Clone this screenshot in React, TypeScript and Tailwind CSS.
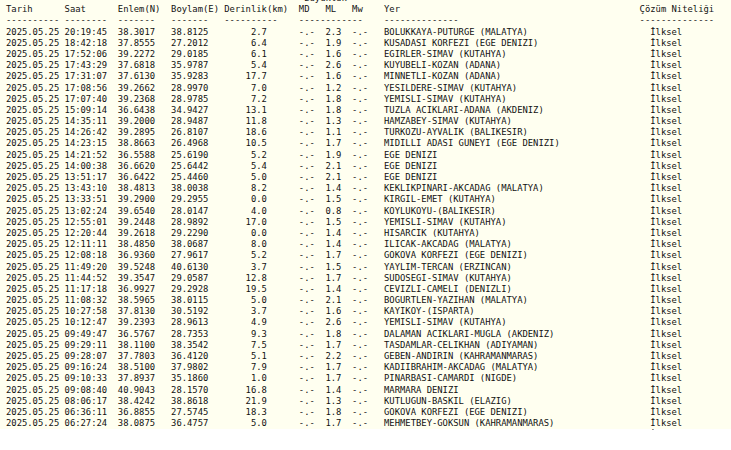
const rows: [string, string, string, string, string, string][] = [
    ['20:19:45', '38.3017', '38.8125', '2.7', '2.3', 'BOLUKKAYA-PUTURGE (MALATYA)'],
    ['18:42:18', '37.8555', '27.2012', '6.4', '1.9', 'KUSADASI KORFEZI (EGE DENIZI)'],
    ['17:52:06', '39.2272', '29.0185', '6.1', '1.6', 'EGIRLER-SIMAV (KUTAHYA)'],
    ['17:43:29', '37.6818', '35.9787', '5.4', '2.6', 'KUYUBELI-KOZAN (ADANA)'],
    ['17:31:07', '37.6130', '35.9283', '17.7', '1.6', 'MINNETLI-KOZAN (ADANA)'],
    ['17:08:56', '39.2662', '28.9970', '7.0', '1.2', 'YESILDERE-SIMAV (KUTAHYA)'],
    ['17:07:40', '39.2368', '28.9785', '7.2', '1.8', 'YEMISLI-SIMAV (KUTAHYA)'],
    ['15:09:14', '36.6438', '34.9427', '13.1', '1.8', 'TUZLA ACIKLARI-ADANA (AKDENIZ)'],
    ['14:35:11', '39.2000', '28.9487', '11.8', '1.3', 'HAMZABEY-SIMAV (KUTAHYA)'],
    ['14:26:42', '39.2895', '26.8107', '18.6', '1.1', 'TURKOZU-AYVALIK (BALIKESIR)'],
    ['14:23:15', '38.8663', '26.4968', '10.5', '1.7', 'MIDILLI ADASI GUNEYI (EGE DENIZI)'],
    ['14:21:52', '36.5588', '25.6190', '5.2', '1.9', 'EGE DENIZI'],
    ['14:00:38', '36.6620', '25.6442', '5.4', '2.1', 'EGE DENIZI'],
    ['13:51:17', '36.6422', '25.4460', '5.0', '2.1', 'EGE DENIZI'],
    ['13:43:10', '38.4813', '38.0038', '8.2', '1.4', 'KEKLIKPINARI-AKCADAG (MALATYA)'],
    ['13:33:51', '39.2900', '29.2955', '0.0', '1.5', 'KIRGIL-EMET (KUTAHYA)'],
    ['13:02:24', '39.6540', '28.0147', '4.0', '0.8', 'KOYLUKOYU-(BALIKESIR)'],
    ['12:55:01', '39.2448', '28.9892', '17.0', '1.5', 'YEMISLI-SIMAV (KUTAHYA)'],
    ['12:20:44', '39.2618', '29.2290', '0.0', '1.4', 'HISARCIK (KUTAHYA)'],
    ['12:11:11', '38.4850', '38.0687', '8.0', '1.4', 'ILICAK-AKCADAG (MALATYA)'],
    ['12:08:18', '36.9360', '27.9617', '5.2', '1.7', 'GOKOVA KORFEZI (EGE DENIZI)'],
    ['11:49:20', '39.5248', '40.6130', '3.7', '1.5', 'YAYLIM-TERCAN (ERZINCAN)'],
    ['11:44:52', '39.3547', '29.0587', '12.8', '1.7', 'SUDOSEGI-SIMAV (KUTAHYA)'],
    ['11:17:18', '36.9927', '29.2928', '19.5', '1.4', 'CEVIZLI-CAMELI (DENIZLI)'],
    ['11:08:32', '38.5965', '38.0115', '5.0', '2.1', 'BOGURTLEN-YAZIHAN (MALATYA)'],
    ['10:27:58', '37.8130', '30.5192', '3.7', '1.6', 'KAYIKOY-(ISPARTA)'],
    ['10:12:47', '39.2393', '28.9613', '4.9', '2.6', 'YEMISLI-SIMAV (KUTAHYA)'],
    ['09:49:47', '36.5767', '28.7353', '9.3', '1.8', 'DALAMAN ACIKLARI-MUGLA (AKDENIZ)'],
    ['09:29:11', '38.1100', '38.3542', '7.5', '1.7', 'TASDAMLAR-CELIKHAN (ADIYAMAN)'],
    ['09:28:07', '37.7803', '36.4120', '5.1', '2.2', 'GEBEN-ANDIRIN (KAHRAMANMARAS)'],
    ['09:16:24', '38.5100', '37.9802', '7.9', '1.7', 'KADIIBRAHIM-AKCADAG (MALATYA)'],
    ['09:10:33', '37.8937', '35.1860', '1.0', '1.7', 'PINARBASI-CAMARDI (NIGDE)'],
    ['09:08:40', '40.9043', '28.1570', '16.8', '1.4', 'MARMARA DENIZI'],
    ['08:06:17', '38.4242', '38.8618', '21.9', '1.3', 'KUTLUGUN-BASKIL (ELAZIG)'],
    ['06:36:11', '36.8855', '27.5745', '18.3', '1.8', 'GOKOVA KORFEZI (EGE DENIZI)'],
    ['06:27:24', '38.0875', '36.4757', '5.0', '1.7', 'MEHMETBEY-GOKSUN (KAHRAMANMARAS)'],
];

const header = [
    `${' '.repeat(56)}Büyüklük`,
    `Tarih      Saat      Enlem(N)  Boylam(E) Derinlik(km)  MD   ML   Mw    Yer${' '.repeat(45)}Çözüm Niteliği`,
    `---------- --------  -------   -------   ----------    ------------    --------------${' '.repeat(34)}--------------`,
];

const toLine = ([time, lat, lon, depth, ml, place]: (typeof rows)[number]) =>
    `2025.05.25 ${time}  ${lat}   ${lon}   ${depth.padStart(8)}      -.-  ${ml}  -.-   ${place.padEnd(50)}İlksel`;

export default function App() {
    const text = [...header, ...rows.map(toLine), `${' '.repeat(121)}İlksel`].join('\n');

    return (
        <div className="h-[430px] overflow-hidden bg-white">
            <div className="flow-root h-[429px] bg-[#fffff0]">
                <pre className="-mt-[7px] pl-[6px] font-['DejaVu_Sans_Mono',monospace] text-[8.85px] leading-[11.18px] text-[#111]">
                    {text}
                </pre>
            </div>
        </div>
    );
}
